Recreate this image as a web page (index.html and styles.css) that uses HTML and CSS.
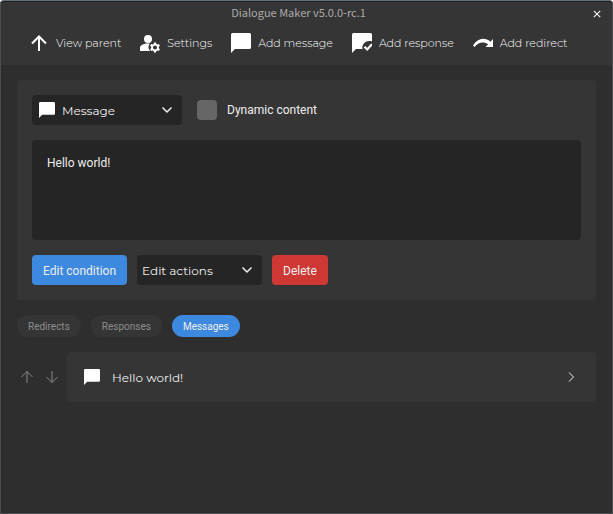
FILE: index.html
```html
<!DOCTYPE html>
<html lang="en">

<head>
    <meta charset="UTF-8">
    <meta name="viewport" content="width=device-width, initial-scale=1.0">
    <title>Dialogue Maker v5.0.0-rc.1</title>
    <link rel="stylesheet" href="styles.css">
</head>

<body>
    <svg class="symbols" aria-hidden="true">
        <symbol id="bubble" viewBox="0 0 20 20">
            <path d="M1.500 0h17A1.500 1.500 0 0 1 20 1.500v13a1.500 1.500 0 0 1-1.500 1.500H4L0 20V1.500A1.500 1.500 0 0 1 1.500 0z" />
        </symbol>
        <symbol id="chevron" viewBox="0 0 12 12">
            <path d="M1.500 3.500 6 8l4.500-4.500" fill="none" stroke="currentColor" stroke-width="1.500" />
        </symbol>
    </svg>
    <div class="window">
        <header>
            <div class="titlebar">
                <h1>Dialogue Maker v5.0.0-rc.1</h1>
                <button class="close" aria-label="Close">
                    <svg viewBox="0 0 8 8"><path d="M.8.8l6.400 6.400M7.200.8.8 7.200" fill="none" stroke="currentColor" stroke-width="1.200" /></svg>
                </button>
            </div>
            <nav class="toolbar">
                <button>
                    <svg viewBox="0 0 20 20"><path d="M10 18V3.500M3 10.500 10 3.500l7 7" fill="none" stroke="currentColor" stroke-width="2" /></svg>
                    View parent
                </button>
                <button>
                    <svg viewBox="0 0 20 20">
                        <circle cx="8" cy="6" r="4" />
                        <path d="M0 18v-3c0-3 3.500-4.500 8-4.500l1.800.1A6 6 0 0 0 10 18z" />
                        <path fill-rule="evenodd" d="M14 9.500h2l.4 1.500 1 .6 1.500-.5 1 1.700-1.100 1.100v1.200l1.100 1.100-1 1.700-1.500-.4-1 .6-.4 1.500h-2l-.4-1.500-1-.6-1.500.4-1-1.700 1.100-1.100v-1.200l-1.100-1.100 1-1.700 1.500.5 1-.6zM15 12.500a2 2 0 1 0 0 4 2 2 0 0 0 0-4z" />
                    </svg>
                    Settings
                </button>
                <button>
                    <svg><use href="#bubble" /></svg>
                    Add message
                </button>
                <button>
                    <svg viewBox="0 0 20 20">
                        <path d="M1.500 0h17A1.500 1.500 0 0 1 20 1.500V8.500C14 6.500 9.500 11 10.500 16H4l-4 4V1.500A1.500 1.500 0 0 1 1.500 0z" />
                        <path d="M12.500 13.800l2.700 2.700L20 11.200" fill="none" stroke="currentColor" stroke-width="2.200" />
                    </svg>
                    Add response
                </button>
                <button>
                    <svg viewBox="0 0 20 20">
                        <path d="M20 6V14h-7.500l2.700-2.700C10.500 8 5 9 1.700 14L0 12.500C4.500 5 12 4 17.400 8.700z" />
                    </svg>
                    Add redirect
                </button>
            </nav>
        </header>
        <main>
            <section class="editor">
                <div class="row settings">
                    <div class="dropdown type">
                        <svg class="kind"><use href="#bubble" /></svg>
                        <select aria-label="Type">
                            <option>Message</option>
                            <option>Response</option>
                            <option>Redirect</option>
                        </select>
                        <svg class="arrow"><use href="#chevron" /></svg>
                    </div>
                    <label class="check"><input type="checkbox">Dynamic content</label>
                </div>
                <textarea aria-label="Content">Hello world!</textarea>
                <div class="row">
                    <button class="btn primary">Edit condition</button>
                    <div class="dropdown actions">
                        <select aria-label="Edit actions">
                            <option>Edit actions</option>
                        </select>
                        <svg class="arrow"><use href="#chevron" /></svg>
                    </div>
                    <button class="btn danger">Delete</button>
                </div>
            </section>
            <div class="row tabs">
                <button>Redirects</button>
                <button>Responses</button>
                <button class="selected">Messages</button>
            </div>
            <ul class="items">
                <li>
                    <button class="move" aria-label="Move up">
                        <svg viewBox="0 0 14 14"><path d="M7 13V1.500M1.500 7 7 1.500 12.500 7" fill="none" stroke="currentColor" /></svg>
                    </button>
                    <button class="move" aria-label="Move down">
                        <svg viewBox="0 0 14 14"><path d="M7 1v11.500M1.500 7 7 12.500 12.500 7" fill="none" stroke="currentColor" /></svg>
                    </button>
                    <a class="item" href="#message">
                        <svg class="kind"><use href="#bubble" /></svg>
                        <span>Hello world!</span>
                        <svg class="open" viewBox="0 0 10 10"><path d="M3 .5 7.500 5 3 9.500" fill="none" stroke="currentColor" /></svg>
                    </a>
                </li>
            </ul>
        </main>
    </div>
</body>

</html>
```
FILE: styles.css
```css
* {
    box-sizing: border-box;
}

body {
    margin: 0;
    color: #eee;
    font-family: Roboto, sans-serif;
    font-size: 12px;
}

button,
select,
textarea {
    border: 0;
    color: inherit;
    font: inherit;
}

button {
    padding: 0;
    background: none;
    cursor: pointer;
}

svg {
    flex: none;
    fill: currentColor;
}

.symbols {
    display: none;
}

.window {
    min-height: 100vh;
    border: 1px solid #4c4d50;
    border-top-color: #66717f;
    border-radius: 4px 4px 0 0;
    background-color: #2e2e2e;
}

header {
    border-top: 1px solid #222;
    border-radius: 3px 3px 0 0;
    background-color: #353535;
}

.titlebar {
    display: grid;
    grid-template-columns: 20px 1fr 20px;
    align-items: center;
    height: 24px;
    padding: 0 5px;
}

.titlebar h1 {
    grid-column: 2;
    margin: 0;
    padding: 0 16px 4px 0;
    color: #aaa;
    font-family: "Noto Sans CJK SC", "Noto Sans", sans-serif;
    font-size: 11px;
    font-weight: normal;
    text-align: center;
}

.close svg {
    display: block;
    width: 8px;
    height: 8px;
    margin: auto;
}

.toolbar {
    display: flex;
    gap: 19px;
    padding: 7px 28px 12px;
    color: #fff;
    font-family: Montserrat, sans-serif;
    font-size: 11px;
    font-weight: 300;
}

.toolbar button {
    display: flex;
    align-items: center;
    gap: 7px;
    height: 20px;
    white-space: nowrap;
}

.toolbar svg {
    width: 20px;
    height: 20px;
}

main {
    display: flex;
    flex-direction: column;
    gap: 15px;
    padding: 15px 16px;
}

.editor {
    display: flex;
    flex-direction: column;
    gap: 15px;
    padding: 15px;
    border-radius: 4px;
    background-color: #353535;
}

.row {
    display: flex;
    align-items: center;
    gap: 10px;
}

.settings {
    gap: 15px;
}

.dropdown {
    display: grid;
    align-items: center;
    height: 30px;
    border-radius: 4px;
    background-color: #252525;
    font-family: Montserrat, sans-serif;
}

/* icon, select and arrow share one cell */
.dropdown > * {
    grid-area: 1 / 1;
}

.dropdown select {
    width: 100%;
    height: 30px;
    padding: 0 30px 0 5px;
    background: none;
    appearance: none;
}

.dropdown option {
    background-color: #252525;
}

.dropdown svg {
    pointer-events: none;
}

.type {
    width: 150px;
}

.type select {
    padding-left: 30px;
}

.actions {
    width: 125px;
}

.kind {
    width: 16px;
    height: 16px;
    color: #fff;
}

.dropdown .kind {
    margin-left: 7px;
}

.arrow {
    justify-self: end;
    width: 12px;
    height: 12px;
    margin-right: 9px;
}

.check {
    display: flex;
    align-items: center;
    gap: 10px;
}

.check input {
    width: 20px;
    height: 20px;
    margin: 0;
    border-radius: 4px;
    background-color: #666;
    appearance: none;
}

.check input:checked {
    background-color: #3d89df;
}

textarea {
    display: block;
    width: 100%;
    height: 100px;
    padding: 16px 15px;
    border-radius: 4px;
    background-color: #252525;
    resize: none;
}

.btn {
    height: 30px;
    padding: 1px 11px 0;
    border-radius: 4px;
}

.primary {
    background-color: #3d89df;
}

.danger {
    background-color: #cd3835;
}

.tabs button {
    height: 22px;
    padding: 0 11px;
    border-radius: 11px;
    background-color: #353535;
    color: #8c8c8c;
    font-size: 10px;
}

.tabs .selected {
    background-color: #3d89df;
    color: #eee;
}

.items {
    margin: 0;
    padding: 0;
    list-style: none;
}

.items li {
    display: flex;
    align-items: center;
}

.move {
    width: 25px;
    color: #888;
}

.move svg {
    display: block;
    width: 14px;
    height: 14px;
    margin-left: 3px;
}

.item {
    display: flex;
    flex: 1;
    align-items: center;
    gap: 12px;
    height: 50px;
    padding: 0 20px 0 17px;
    border-radius: 4px;
    background-color: #353535;
    color: inherit;
    font-family: Montserrat, sans-serif;
    text-decoration: none;
}

.open {
    width: 10px;
    height: 10px;
    margin-left: auto;
}
```
